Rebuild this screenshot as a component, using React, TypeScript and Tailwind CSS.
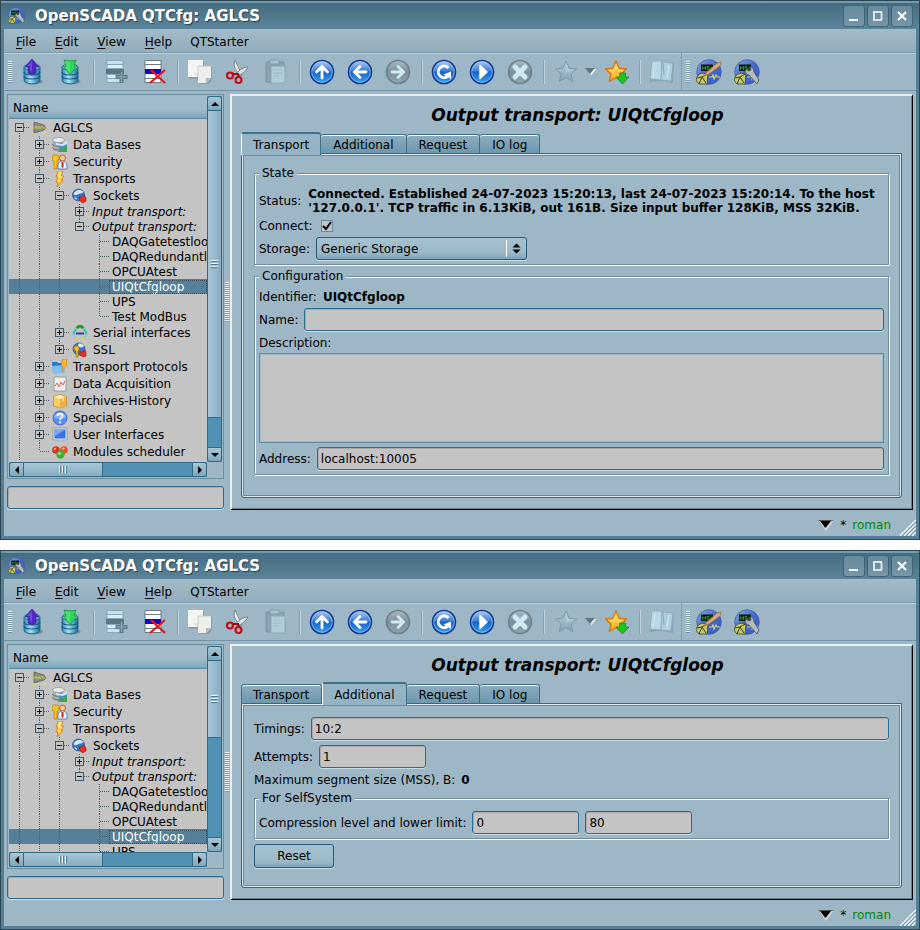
import { useId, useState } from 'react'
import type { ReactNode } from 'react'

type TreeNode = {
    label: string
    icon?: ReactNode
    italic?: boolean
    closed?: boolean
    children?: TreeNode[]
}

type TreeRow = {
    node: TreeNode
    guides: boolean[]
    last: boolean
    first: boolean
}

/* ---------- small 16px tree icons ---------- */

function Ico({ children }: { children: ReactNode }) {
    return (
        <svg width="16" height="16" viewBox="0 0 16 16" className="shrink-0" aria-hidden="true">
            {children}
        </svg>
    )
}

const StationIcon = (
    <Ico>
        <path d="M2 2l10 3 2 3-2 2-10 3z" fill="#8b8c82" stroke="#5e6058" strokeWidth="0.8" />
        <path d="M0 8h3l1-2 1 3 2-3 1 3 2-3 1 2h5" fill="none" stroke="#c9c94e" strokeWidth="0.9" />
        <path d="M0 14h4l1-1M9 13l2 1h4" fill="none" stroke="#e0e04a" strokeWidth="1" />
    </Ico>
)

const DatabaseIcon = (
    <Ico>
        <path d="M0.500 3.500v8c0 4 11 4 11 0v-8z" fill="#aab0b0" />
        <path d="M0.500 7c0 3 11 3 11 0M0.500 10.500c0 3 11 3 11 0" fill="none" stroke="#6d7373" strokeWidth="1" />
        <ellipse cx="6.500" cy="3" rx="6" ry="2.500" fill="#e6eaea" stroke="#8a9090" strokeWidth="0.7" />
        <path d="M7 6h8v9H7z" fill="#4c8fd0" />
        <path d="M6 15l3-4 2 1 4-4v7z" fill="#3aa64a" />
        <path d="M4 6l6 1 5-3v3l-4 2-7-1z" fill="#cfe8f7" />
    </Ico>
)

const SecurityIcon = (
    <Ico>
        <path d="M1 1h5l1 1v4L5 7v8H2V7L0 6V2z" fill="#f5c22b" stroke="#b5780a" strokeWidth="0.7" />
        <circle cx="10.500" cy="4" r="3" fill="#f3c79a" stroke="#b0562d" strokeWidth="0.9" />
        <path d="M6 15v-4c0-3 3-4 4.500-4S15 8 15 11v4z" fill="#eef4fc" stroke="#4a78c0" strokeWidth="0.9" />
        <path d="M9.500 8h2v5l-1 1-1-1z" fill="#d22" />
    </Ico>
)

const BoltIcon = (
    <Ico>
        <path d="M6 0h5L9 5h3L9 9h2l-6 7 1-5H4l2-5H4z" fill="#ffd94a" stroke="#e07a1a" strokeWidth="0.9" />
        <path d="M7 2h2L7 6h3" fill="none" stroke="#fff6c8" strokeWidth="0.8" />
    </Ico>
)

const SocketsIcon = (
    <Ico>
        <circle cx="6.500" cy="7" r="6" fill="#2f77cc" stroke="#1e4f96" strokeWidth="0.7" />
        <path d="M1.500 6c2-5 8-5 10-2-2 2-3 1-5 2S3 8 1.500 6zM2 10c2-1 3 0 3 2" fill="#dcecfa" />
        <path d="M7 9l2 0 3-2 2 3v3l-3 2-3-2z" fill="#e33122" stroke="#9a1710" strokeWidth="0.6" />
    </Ico>
)

const SerialIcon = (
    <Ico>
        <path d="M5 3.500c1-3 5-3 6 0" fill="none" stroke="#21a021" strokeWidth="3" />
        <path d="M4 4L2 7v2M12 4l2 3v2" fill="none" stroke="#2fc4c4" strokeWidth="2.4" />
        <path d="M1 9l2 3 3 3M15 9l-2 3-3 3" fill="none" stroke="#8dc9c0" strokeWidth="2.200" />
        <path d="M4 13l2 2M12 13l-2 2" fill="none" stroke="#e0dc3a" strokeWidth="1.800" />
        <path d="M4 8.500h8" stroke="#3a3ab0" strokeWidth="2" />
    </Ico>
)

const SslIcon = (
    <Ico>
        <circle cx="7" cy="7" r="6" fill="#2f77cc" stroke="#1e4f96" strokeWidth="0.7" />
        <path d="M6 2c3-1 5 0 6 2-2 2-4 2-6 0z" fill="#dcecfa" />
        <path d="M3 4h3l1 1v3l-1 1v6H4V9L2 8V5z" fill="#f5c22b" stroke="#9a6400" strokeWidth="0.7" />
        <path d="M8 10l2 0 3-2 1 3v3l-3 1-3-2z" fill="#e33122" stroke="#9a1710" strokeWidth="0.6" />
    </Ico>
)

const ProtocolIcon = (
    <Ico>
        <path d="M0 3h5l1 1h6v10H1z" fill="#2b77cf" />
        <path d="M0 7l12-1 1 8-12 1z" fill="#7fbdf5" />
        <path d="M11 0h4l-1 5h1l-5 8 1-6H9z" fill="#ffb928" stroke="#d9730f" strokeWidth="0.6" />
    </Ico>
)

const ChartIcon = (
    <Ico>
        <path d="M2 1h12v14H2z" fill="#f1efef" stroke="#8f9599" strokeWidth="0.9" />
        <path d="M3 10l2-3 2 4 2-5 2 3 2-4" fill="none" stroke="#d55a5a" strokeWidth="1" />
    </Ico>
)

const ArchiveIcon = (
    <Ico>
        <path d="M1.500 3.500L8 1.500l6.500 2v9.500L8 15l-6.500-2z" fill="#f7cf62" stroke="#c48f25" strokeWidth="0.8" />
        <path d="M2 4l6 2 6-2-6-2z" fill="#fdebae" />
        <path d="M8 6v9l6-2V4z" fill="#eab545" />
        <path d="M5 3l6 2v3" fill="none" stroke="#fff6d8" strokeWidth="1" />
    </Ico>
)

const QuestionIcon = (
    <Ico>
        <circle cx="8" cy="8" r="7" fill="#5a8ff0" stroke="#2d5cc8" strokeWidth="0.8" />
        <path d="M2 7c1-6 11-6 12 0-3 2-9 2-12 0z" fill="#9fc0fb" opacity="0.7" />
        <path d="M5.500 6c0-3 5-3 5 0 0 2-2.500 1.500-2.500 4" fill="none" stroke="#fff" strokeWidth="1.800" />
        <circle cx="8" cy="12.300" r="1.100" fill="#fff" />
    </Ico>
)

const MonitorIcon = (
    <Ico>
        <path d="M1 1h14v12H1z" fill="#dfe5ea" stroke="#8a959e" strokeWidth="0.8" />
        <path d="M2.500 2.500h11v9h-11z" fill="#3b74e0" />
        <path d="M2.500 2.500h11L3 9z" fill="#78a5f5" />
        <path d="M6 13h4l2 2H4z" fill="#b4bcc2" />
    </Ico>
)

const ModulesIcon = (
    <Ico>
        <circle cx="4" cy="6" r="3.800" fill="#d8331f" />
        <circle cx="12" cy="6" r="3.800" fill="#e8502c" />
        <circle cx="8.500" cy="10.500" r="4.200" fill="#3cb432" />
        <circle cx="3" cy="5" r="1.200" fill="#f79a8c" />
        <circle cx="7.500" cy="9.500" r="1.300" fill="#b0eda2" />
        <circle cx="11.500" cy="4.500" r="1" fill="#fde3a8" />
    </Ico>
)

const stationTree: TreeNode = {
    label: 'AGLCS',
    icon: StationIcon,
    children: [
        { label: 'Data Bases', icon: DatabaseIcon, closed: true },
        { label: 'Security', icon: SecurityIcon, closed: true },
        {
            label: 'Transports',
            icon: BoltIcon,
            children: [
                {
                    label: 'Sockets',
                    icon: SocketsIcon,
                    children: [
                        { label: 'Input transport:', italic: true, closed: true },
                        {
                            label: 'Output transport:',
                            italic: true,
                            children: [
                                { label: 'DAQGatetestloop' },
                                { label: 'DAQRedundantloop' },
                                { label: 'OPCUAtest' },
                                { label: 'UIQtCfgloop' },
                                { label: 'UPS' },
                                { label: 'Test ModBus' }
                            ]
                        }
                    ]
                },
                { label: 'Serial interfaces', icon: SerialIcon, closed: true },
                { label: 'SSL', icon: SslIcon, closed: true }
            ]
        },
        { label: 'Transport Protocols', icon: ProtocolIcon, closed: true },
        { label: 'Data Acquisition', icon: ChartIcon, closed: true },
        { label: 'Archives-History', icon: ArchiveIcon, closed: true },
        { label: 'Specials', icon: QuestionIcon, closed: true },
        { label: 'User Interfaces', icon: MonitorIcon, closed: true },
        { label: 'Modules scheduler', icon: ModulesIcon }
    ]
}

function flatten(node: TreeNode, guides: boolean[], last: boolean, first: boolean): TreeRow[] {
    const rows: TreeRow[] = [{ node, guides, last, first }]
    const kids = node.children ?? []
    kids.forEach((kid, i) => {
        rows.push(...flatten(kid, [...guides, !last], i === kids.length - 1, false))
    })
    return rows
}

const treeRows = flatten(stationTree, [], false, true)

function Guide({ height, on }: { height: number; on: boolean }) {
    return (
        <svg width="20" height={height} className="shrink-0" aria-hidden="true">
            {on && <path d={`M10.500 0v${height}`} stroke="#4d6169" strokeDasharray="1 1" />}
        </svg>
    )
}

function Branch({ row, height }: { row: TreeRow; height: number }) {
    const mid = Math.floor(height / 2)
    const { node, first, last } = row
    const expander = node.closed || node.children
    return (
        <svg width="20" height={height} className="shrink-0" aria-hidden="true" shapeRendering="crispEdges">
            <path d={`M10.500 ${first ? mid : 0}V${last ? mid : height}`} stroke="#4d6169" strokeDasharray="1 1" />
            <path d={`M11 ${mid + 0.5}H20`} stroke="#4d6169" strokeDasharray="1 1" />
            {expander && (
                <>
                    <rect x="6.500" y={mid - 3.5} width="8" height="8" fill="#c4c4c4" stroke="#3f5964" />
                    <path d={`M8 ${mid + 0.5}h5`} stroke="#000" />
                    {node.closed && <path d={`M10.500 ${mid - 2}v5`} stroke="#000" />}
                </>
            )}
        </svg>
    )
}

function Tree() {
    return (
        <ul>
            {treeRows.map((row) => {
                const { node } = row
                const height = node.icon ? 17 : 15
                const selected = node.label === 'UIQtCfgloop'
                return (
                    <li
                        key={node.label}
                        className={`flex items-center whitespace-nowrap ${node.icon ? 'h-[17px]' : 'h-[15px]'} ${selected ? 'bg-[#567f98] text-white' : ''}`}
                    >
                        {row.guides.map((on, i) => (
                            <Guide key={i} height={height} on={on} />
                        ))}
                        <Branch row={row} height={height} />
                        <span className={`flex items-center gap-[5px] pl-[3px] ${node.italic ? 'italic' : ''} ${selected ? 'grow outline-1 -outline-offset-1 outline-dotted outline-[#35505f]' : ''}`}>
                            {node.icon}
                            {node.label}
                        </span>
                    </li>
                )
            })}
        </ul>
    )
}

/* ---------- toolbar icons ---------- */

function BigIco({ children }: { children: ReactNode }) {
    return (
        <svg width="26" height="26" viewBox="0 0 26 26" aria-hidden="true">
            {children}
        </svg>
    )
}

function Gradients() {
    return (
        <svg width="0" height="0" className="absolute" aria-hidden="true">
            <defs>
                <linearGradient id="blue" x1="0" y1="0" x2="0" y2="1">
                    <stop offset="0" stopColor="#b4cdf0" />
                    <stop offset="0.45" stopColor="#3f7fd6" />
                    <stop offset="0.5" stopColor="#1763c8" />
                    <stop offset="1" stopColor="#35a5f2" />
                </linearGradient>
                <linearGradient id="grey" x1="0" y1="0" x2="0" y2="1">
                    <stop offset="0" stopColor="#a9bac3" />
                    <stop offset="0.5" stopColor="#7c909b" />
                    <stop offset="1" stopColor="#8fa5b0" />
                </linearGradient>
                <linearGradient id="cyl" x1="0" y1="0" x2="1" y2="0">
                    <stop offset="0" stopColor="#2b87b4" />
                    <stop offset="0.4" stopColor="#a5e2f7" />
                    <stop offset="1" stopColor="#1a6f9e" />
                </linearGradient>
                <linearGradient id="gold" x1="0" y1="0" x2="0" y2="1">
                    <stop offset="0" stopColor="#fff07a" />
                    <stop offset="1" stopColor="#fba61c" />
                </linearGradient>
                <linearGradient id="silver" x1="0" y1="0" x2="0" y2="1">
                    <stop offset="0" stopColor="#b7d0dc" />
                    <stop offset="1" stopColor="#86a2b1" />
                </linearGradient>
                <linearGradient id="ball" x1="0" y1="0" x2="1" y2="1">
                    <stop offset="0" stopColor="#8fa9e6" />
                    <stop offset="0.5" stopColor="#4468cc" />
                    <stop offset="1" stopColor="#3c5cc4" />
                </linearGradient>
            </defs>
        </svg>
    )
}

function Cylinder() {
    return (
        <>
            <ellipse cx="14.500" cy="22.500" rx="9" ry="3" fill="#4a5d68" opacity="0.5" />
            <path d="M5 8v13c0 5 16 5 16 0V8z" fill="url(#cyl)" stroke="#1b5c80" strokeWidth="0.8" />
            <path d="M5 13c0 4 16 4 16 0M5 17c0 4 16 4 16 0" fill="none" stroke="#175b80" strokeWidth="1.200" />
            <ellipse cx="13" cy="8" rx="8" ry="3" fill="#8fd6ef" stroke="#1b5c80" strokeWidth="0.8" />
        </>
    )
}

const LoadIcon = (
    <BigIco>
        <Cylinder />
        <path d="M13 0l7 8h-3v6c-2 2-6 2-8 0V8H6z" fill="#4f2bc4" stroke="#3c2096" strokeWidth="0.7" />
        <path d="M13 2v11l-2-1V7H8z" fill="#8a6be6" opacity="0.5" />
    </BigIco>
)

const SaveIcon = (
    <BigIco>
        <Cylinder />
        <path d="M7 1c4 1 8 1 12 0l-2 6h3l-7 9-7-9h3z" fill="#2fd45a" stroke="#189038" strokeWidth="0.7" />
        <path d="M8 2l5 1v11L8 8h2z" fill="#6fe888" opacity="0.5" />
    </BigIco>
)

const AddItemIcon = (
    <BigIco>
        <path d="M4 1.500h16v4H4zM4 19.500h16v4H4z" fill="#c5e2f0" stroke="#8ba7b5" />
        <path d="M4 5.500h16v4H4zM4 15.500h16v4H4z" fill="#d5eefa" stroke="#8ba7b5" />
        <path d="M3 10h18v5H3z" fill="#5b7683" />
        <path d="M18.500 12v12M12.500 18h12" stroke="#5c7785" strokeWidth="4" />
        <path d="M18.500 13v10M13.500 18h10" stroke="#86a2b0" strokeWidth="1.500" />
    </BigIco>
)

const DelItemIcon = (
    <BigIco>
        <path d="M4 1.500h16v22H4z" fill="#fff" stroke="#6d7a80" />
        <path d="M4 5.500h16M4 19.500h16" stroke="#6d7a80" />
        <path d="M4 10h16v5H4z" fill="#0909d6" />
        <path d="M10 11l14 13M24 11L9 24" stroke="#e51515" strokeWidth="2.200" fill="none" />
    </BigIco>
)

const CopyIcon = (
    <BigIco>
        <path d="M2 2h15v14l-3 4H2z" fill="#7f8f98" opacity="0.6" />
        <path d="M1 1h15v13l-4 4H1z" fill="#f4f4f2" />
        <path d="M12 8h13v13l-3 4H12z" fill="#7f8f98" opacity="0.6" />
        <path d="M11 7h13v12l-5 5h-8z" fill="#eeeeea" />
        <path d="M11 7h13M11 7v11" stroke="#b9bdbd" strokeWidth="0.7" />
        <path d="M24 19l-5 5v-5z" fill="#b4b9ba" />
        <path d="M11 18V14H7z" fill="#d5d8d8" />
    </BigIco>
)

const CutIcon = (
    <BigIco>
        <path d="M10 1c-2 5 0 9 4 14l3 2C15 11 12 6 10 1z" fill="#f0f2f2" stroke="#6d777b" strokeWidth="0.8" />
        <path d="M23 8c-4 0-8 2-12 7l2 2c3-2 8-4 10-9z" fill="#d9dedf" stroke="#6d777b" strokeWidth="0.8" />
        <circle cx="5" cy="16.500" r="3" fill="none" stroke="#c21018" strokeWidth="2.200" />
        <circle cx="13.500" cy="21" r="3" fill="none" stroke="#c21018" strokeWidth="2.200" />
        <path d="M7 15l6 0 1 3" fill="none" stroke="#a00c12" strokeWidth="2.200" />
    </BigIco>
)

const PasteIcon = (
    <BigIco>
        <path d="M3 3h18v20H3z" fill="#8aa4b1" stroke="#7891a0" strokeWidth="0.8" />
        <path d="M7 1h9v4H7z" fill="#a9c4d1" stroke="#7890a0" strokeWidth="0.7" />
        <path d="M8 7h14v17H8z" fill="#b0cdd9" stroke="#86a1b0" strokeWidth="0.8" />
        <path d="M10 11h9M10 14h9M10 17h6" stroke="#a0bcc9" />
    </BigIco>
)

function Round({ grey, children }: { grey?: boolean; children: ReactNode }) {
    return (
        <BigIco>
            <circle cx="13" cy="13" r="11.500" fill={grey ? 'url(#grey)' : 'url(#blue)'} stroke={grey ? '#6e828d' : '#10368f'} strokeWidth="1.600" />
            {!grey && <circle cx="13" cy="13" r="10.300" fill="none" stroke="#9cc8f5" strokeWidth="0.700" />}
            {children}
        </BigIco>
    )
}

const UpIcon = (
    <Round>
        <path d="M13 19V8.500M7.500 13L13 7.500l5.500 5.500" fill="none" stroke="#fff" strokeWidth="2.800" strokeLinecap="round" />
    </Round>
)
const BackIcon = (
    <Round>
        <path d="M19 13H8.500M13 7.500L7.500 13l5.500 5.500" fill="none" stroke="#fff" strokeWidth="2.800" strokeLinecap="round" />
    </Round>
)
const ForwardIcon = (
    <Round grey>
        <path d="M7 13h10.500M13 7.500l5.500 5.500-5.500 5.500" fill="none" stroke="#cfe9f5" strokeWidth="2.800" strokeLinecap="round" />
    </Round>
)
const RefreshIcon = (
    <Round>
        <path d="M17.500 9a5.800 5.800 0 1 0-1 8.500" fill="none" stroke="#fff" strokeWidth="2.800" />
        <path d="M12.500 15.500l7.500-3v7.500z" fill="#fff" />
    </Round>
)
const StartIcon = (
    <Round>
        <path d="M11 6.500l7 6.500-7 6.500z" fill="#fff" stroke="#fff" strokeWidth="1.500" strokeLinejoin="round" />
    </Round>
)
const StopIcon = (
    <Round grey>
        <path d="M8 8l10 10M18 8L8 18" stroke="#cfe9f5" strokeWidth="5" strokeLinecap="round" />
    </Round>
)

const starPath = 'M13 2l3.200 7.200 7.300.8-5.500 5 1.700 7.500L13 18.500 6.300 22.500 8 15 2.500 10l7.300-.8z'

const FavoriteIcon = (
    <BigIco>
        <path d={starPath} fill="url(#silver)" stroke="#7c98a8" strokeLinejoin="round" />
        <path d="M13 4l2.500 6 6 .8-8.500 3z" fill="#b7d0dc" opacity="0.6" />
    </BigIco>
)
const FavoriteAddIcon = (
    <BigIco>
        <path d={starPath} fill="url(#gold)" stroke="#d9740c" strokeWidth="1.400" strokeLinejoin="round" />
        <path d="M16.500 14h6v4H26l-6.500 7-6.500-7h3.500z" fill="#1fc51f" stroke="#0c8a0c" strokeWidth="0.7" />
    </BigIco>
)
const ManualIcon = (
    <BigIco>
        <path d="M3 4l10-1 12 1-1 20-12-2-12 1z" fill="#7e98a6" opacity="0.6" />
        <path d="M3 2h10l-1 19-11-1z" fill="#b9d8e6" stroke="#8aa5b3" strokeWidth="0.7" />
        <path d="M13 3l11 1-2 18-10-1z" fill="#b0cedc" stroke="#8aa5b3" strokeWidth="0.7" />
        <path d="M14 4l1 12" stroke="#8ba7b5" />
        <path d="M6 4L4 18M20 6l-2 13" stroke="#c9e3ee" strokeWidth="1.500" />
    </BigIco>
)

function ScadaBall({ children, size = 26 }: { children: ReactNode; size?: number }) {
    return (
        <svg width={size} height={size} viewBox="0 0 26 26" className="shrink-0" aria-hidden="true">
            <circle cx="13" cy="13" r="12.300" fill="url(#ball)" stroke="#3656a8" strokeWidth="0.7" />
            <path d="M5 5.500h12v6.500H5z" fill="#071607" />
            <path d="M6.500 11V7.500L8 9.500l1.500-2V11M13 7.500h-2v1.500h2V11h-2M15 7.500V11" fill="none" stroke="#2ca02c" strokeWidth="0.9" />
            <path d="M13 18h3l1-2 1 4 2-4 1 2h3" fill="none" stroke="#d2d268" strokeWidth="1.200" />
            <path d="M1 18c2-4 7-5 11-2-1 3 0 6-1 9H3c-3-3-3-5-2-7z" fill="#c4c86a" stroke="#3d411a" strokeWidth="0.8" />
            <path d="M1 19l5-1 5-3M6 18l-3 7M6 18l4 6" fill="none" stroke="#3d411a" strokeWidth="1" />
            {children}
        </svg>
    )
}

const PencilArt = (
    <path d="M10 14L21 4l4-1-1 4-11 8-5 2z" fill="#d9aa7c" stroke="#9a6a42" strokeWidth="0.8" />
)
const WrenchArt = (
    <path d="M12 10l3 2 2-1-1-3c3 0 4 2 4 5l5 8-2 4-8-9c-3 0-4-3-3-6z" fill="#b5bbc2" stroke="#4f575f" strokeWidth="0.9" />
)

function Tool({ name, children }: { name: string; children: ReactNode }) {
    return (
        <button type="button" aria-label={name} className="flex h-[34px] w-[38px] shrink-0 items-center justify-center">
            {children}
        </button>
    )
}

function Sep() {
    return (
        <span className="flex w-2 shrink-0 justify-center">
            <span className="h-6 w-px bg-[#86a3b3] shadow-[1px_0_#bdd3de]" />
        </span>
    )
}

function Grip() {
    return <span className="h-[22px] w-1 shrink-0 bg-[repeating-linear-gradient(#fff_0_1px,#6d8b9b_1px_2px)]" />
}

function Toolbar() {
    return (
        <div className="flex h-[38px] items-center overflow-hidden border-b border-[#7393a5] pl-1">
            <Grip />
            <div className="flex h-full items-center border-r border-[#7e9fb1] pl-px">
                <Tool name="Load">{LoadIcon}</Tool>
                <Tool name="Save">{SaveIcon}</Tool>
                <Sep />
                <Tool name="Add item">{AddItemIcon}</Tool>
                <Tool name="Delete item">{DelItemIcon}</Tool>
                <Sep />
                <Tool name="Copy">{CopyIcon}</Tool>
                <Tool name="Cut">{CutIcon}</Tool>
                <Tool name="Paste">{PasteIcon}</Tool>
                <Sep />
                <Tool name="Up">{UpIcon}</Tool>
                <Tool name="Previous">{BackIcon}</Tool>
                <Tool name="Next">{ForwardIcon}</Tool>
                <Sep />
                <Tool name="Refresh">{RefreshIcon}</Tool>
                <Tool name="Start">{StartIcon}</Tool>
                <Tool name="Stop">{StopIcon}</Tool>
                <Sep />
                <Tool name="Favorites">{FavoriteIcon}</Tool>
                <button type="button" aria-label="Favorites list" className="w-3 shrink-0">
                    <svg width="11" height="7" viewBox="0 0 11 7" aria-hidden="true">
                        <path d="M2 1h9L6.500 7z" fill="#fff" />
                        <path d="M0 0h10L5 6z" fill="#5f7883" />
                    </svg>
                </button>
                <Tool name="Add to favorites">{FavoriteAddIcon}</Tool>
                <Sep />
                <Tool name="Manual">{ManualIcon}</Tool>
            </div>
            <div className="flex items-center pl-1">
                <Grip />
                <Tool name="Vision">
                    <ScadaBall>{PencilArt}</ScadaBall>
                </Tool>
                <Tool name="Configurator">
                    <ScadaBall>{WrenchArt}</ScadaBall>
                </Tool>
            </div>
        </div>
    )
}

/* ---------- window frame ---------- */

function TitleButton({ name, children }: { name: string; children: ReactNode }) {
    return (
        <button
            type="button"
            aria-label={name}
            className="flex size-[22px] items-center justify-center rounded-[3px] border border-[#426477] bg-linear-to-b from-[#66899c] to-[#7796a8]"
        >
            <svg width="12" height="12" viewBox="0 0 12 12" fill="none" stroke="#fff" strokeWidth="2" aria-hidden="true">
                {children}
            </svg>
        </button>
    )
}

function TitleBar() {
    return (
        <div className="flex h-7 items-center gap-[10px] bg-linear-to-b from-[#456a7f] to-[#5b859b] pt-px pr-[6px] pl-[7px] shadow-[inset_0_2px_#6f9bb0]">
            <ScadaBall size={17}>{WrenchArt}</ScadaBall>
            <h1 className="grow text-[15px] font-bold text-white [text-shadow:1px_1px_1px_#24404f]">OpenSCADA QTCfg: AGLCS</h1>
            <div className="flex gap-[2px]">
                <TitleButton name="Minimize">
                    <path d="M1 10h9" />
                </TitleButton>
                <TitleButton name="Maximize">
                    <path d="M1 2h9M1 10h9M2 2v8M9.500 2v8" strokeWidth="1.500" />
                </TitleButton>
                <TitleButton name="Close">
                    <path d="M2 2l8 8M10 2l-8 8" />
                </TitleButton>
            </div>
        </div>
    )
}

function MenuBar() {
    const items = ['File', 'Edit', 'View', 'Help']
    return (
        <div className="flex h-6 items-center border-b border-[#7d9eb0] bg-linear-to-b from-[#a2bbc9] to-[#93adbc] pt-[2px] pl-[2px] shadow-[0_1px_#b9cfdb]">
            {items.map((item) => (
                <button key={item} type="button" className="pr-[9px] pl-[10px]">
                    <span className="underline underline-offset-2">{item[0]}</span>
                    {item.slice(1)}
                </button>
            ))}
            <button type="button" className="px-[9px]">QTStarter</button>
        </div>
    )
}

/* ---------- sidebar ---------- */

const scrollEdge = 'flex shrink-0 items-center justify-center border border-[#336883] bg-linear-to-b from-[#a9c6d6] to-[#7ea8be]'

function Arrow({ d }: { d: string }) {
    return (
        <svg width="8" height="8" viewBox="0 0 8 8" className="shrink-0" aria-hidden="true">
            <path d={d} fill="#000" />
        </svg>
    )
}

const fieldLook = 'h-[23px] min-w-0 rounded-[3px] border border-[#2f6b8c] bg-[#c4c4c4] px-[3px] shadow-[0_1px_#c9dce6,inset_1px_1px_#a9a9a9] outline-none'

function Sidebar({ treeHeight, thumbHeight }: { treeHeight: string; thumbHeight: string }) {
    return (
        <aside className="flex w-[217px] shrink-0 flex-col gap-[7px] pb-px">
            <div className="flex border border-[#6b8fa3] p-px">
                <div className="min-w-0 flex-1">
                    <div className="flex h-[23px] items-center border-b border-[#5d8ba3] bg-linear-to-b from-[#a2bccb] from-60% to-[#78a5bd] pt-[2px] pl-1">Name</div>
                    <div className={`overflow-hidden bg-[#c4c4c4] ${treeHeight}`}>
                        <Tree />
                    </div>
                    <div className="flex h-[15px] bg-[#5091b4]">
                        <button type="button" aria-label="Scroll left" className={`w-[15px] rounded-l-[3px] ${scrollEdge}`}>
                            <Arrow d="M6 0v8L2 4z" />
                        </button>
                        <div className="flex w-[79px] items-center justify-center gap-px border-y border-r border-[#336883] bg-linear-to-b from-[#a9c6d6] to-[#86adc2]">
                            <span className="h-[7px] w-[9px] bg-[repeating-linear-gradient(90deg,#fff_0_1px,#4a7f9b_1px_2px,#93b5c6_2px_3px)]" />
                        </div>
                        <div className="grow border-y border-[#336883]" />
                        <button type="button" aria-label="Scroll right" className={`w-[15px] rounded-r-[3px] ${scrollEdge}`}>
                            <Arrow d="M2 0v8l4-4z" />
                        </button>
                    </div>
                </div>
                <div className="mb-[15px] flex w-[15px] flex-col bg-[#5091b4]">
                    <button type="button" aria-label="Scroll up" className={`h-[15px] rounded-t-[3px] ${scrollEdge}`}>
                        <Arrow d="M0 6h8L4 2z" />
                    </button>
                    <div className={`flex items-center justify-center border-x border-b border-[#336883] bg-linear-to-r from-[#a9c6d6] to-[#86adc2] ${thumbHeight}`}>
                        <span className="h-[9px] w-[7px] bg-[repeating-linear-gradient(#fff_0_1px,#4a7f9b_1px_2px,#93b5c6_2px_3px)]" />
                    </div>
                    <div className="grow border-x border-[#336883]" />
                    <button type="button" aria-label="Scroll down" className={`h-[15px] rounded-b-[3px] ${scrollEdge}`}>
                        <Arrow d="M0 2h8L4 6z" />
                    </button>
                </div>
            </div>
            <input type="text" aria-label="Search" className={fieldLook} />
        </aside>
    )
}

/* ---------- form parts ---------- */

function TextField({ label, value = '', width = 'grow' }: { label: string; value?: string; width?: string }) {
    const id = useId()
    return (
        <div className="flex items-center gap-[6px]">
            <label htmlFor={id} className="shrink-0">{label}</label>
            <input id={id} type="text" defaultValue={value} className={`${fieldLook} ${width}`} />
        </div>
    )
}

function Group({ title, className, children }: { title: string; className: string; children: ReactNode }) {
    return (
        <fieldset className={`min-w-0 border border-[#728c9a] px-1 pb-1 shadow-[inset_1px_1px_#fff,1px_1px_#fff] ${className}`}>
            <legend className="bg-[#9db7c6] px-[3px]">{title}</legend>
            <div className="flex flex-col gap-1">{children}</div>
        </fieldset>
    )
}

function TransportPane() {
    const id = useId()
    return (
        <div className="flex flex-col gap-1">
            <Group title="State" className="pt-[7px]">
                <div className="flex items-center gap-[7px]">
                    <span>Status:</span>
                    <strong>
                        Connected. Established 24-07-2023 15:20:13, last 24-07-2023 15:20:14. To the host '127.0.0.1'. TCP traffic in 6.13KiB, out 161B. Size input buffer 128KiB, MSS 32KiB.
                    </strong>
                </div>
                <div className="flex h-[14px] items-center gap-2">
                    <label htmlFor={`${id}-con`}>Connect:</label>
                    <span className="relative flex">
                        <input
                            id={`${id}-con`}
                            type="checkbox"
                            defaultChecked
                            className="peer size-3 appearance-none border border-[#5f8aa0] bg-[#c4c4c4]"
                        />
                        <svg width="12" height="12" viewBox="0 0 12 12" className="pointer-events-none absolute inset-0 hidden peer-checked:block" aria-hidden="true">
                            <path d="M2 6l3 3 5-7" fill="none" stroke="#000" strokeWidth="2" />
                        </svg>
                    </span>
                </div>
                <div className="flex items-center gap-[6px]">
                    <label htmlFor={`${id}-stor`}>Storage:</label>
                    <span className="relative">
                        <select
                            id={`${id}-stor`}
                            className="block h-[23px] w-[211px] appearance-none rounded-[3px] border border-[#265c7a] bg-linear-to-b from-[#a6c2d1] via-[#9bb8c7] via-70% to-[#7aa6be] px-1 shadow-[0_1px_#c9dce6]"
                        >
                            <option>Generic Storage</option>
                        </select>
                        <span className="pointer-events-none absolute inset-y-[3px] right-[6px] flex items-center gap-[5px]">
                            <span className="h-full w-px bg-white" />
                            <svg width="9" height="11" viewBox="0 0 9 11" aria-hidden="true">
                                <path d="M0.500 4.500h8l-4-4zM0.500 6.500h8l-4 4z" fill="#000" />
                            </svg>
                        </span>
                    </span>
                </div>
            </Group>
            <Group title="Configuration" className="pt-[6px]">
                <div className="flex h-[15px] items-center gap-[6px]">
                    <span>Identifier:</span>
                    <strong>UIQtCfgloop</strong>
                </div>
                <TextField label="Name:" />
                <label htmlFor={`${id}-descr`} className="h-[14px] leading-4">Description:</label>
                <textarea
                    id={`${id}-descr`}
                    className="block h-[90px] resize-none border border-[#5f8aa0] bg-[#c4c4c4] shadow-[inset_0_0_0_1px_#9dbccb] outline-none"
                />
                <TextField label="Address:" value="localhost:10005" />
            </Group>
        </div>
    )
}

function AdditionalPane() {
    return (
        <div className="flex flex-col gap-[5px] pt-px">
            <TextField label="Timings:" value="10:2" />
            <TextField label="Attempts:" value="1" width="w-[107px]" />
            <div className="flex h-[13px] gap-[6px]">
                <span>Maximum segment size (MSS), B:</span>
                <strong>0</strong>
            </div>
            <Group title="For SelfSystem" className="pt-[6px]">
                <div className="flex gap-[6px]">
                    <TextField label="Compression level and lower limit:" value="0" width="w-[107px]" />
                    <input type="text" aria-label="Lower limit" defaultValue="80" className={`${fieldLook} w-[107px]`} />
                </div>
            </Group>
            <button
                type="button"
                className="h-6 w-20 rounded-[3px] border border-[#265c7a] bg-linear-to-b from-[#a6c2d1] via-[#9bb8c7] via-75% to-[#7aa6be] shadow-[0_1px_#c9dce6]"
            >
                Reset
            </button>
        </div>
    )
}

const tabNames = ['Transport', 'Additional', 'Request', 'IO log']

function Tabs({ initial }: { initial: string }) {
    const [tab, setTab] = useState(initial)
    return (
        <div className="flex grow flex-col">
            <div role="tablist" className="flex h-[21px] items-end">
                {tabNames.map((name) => (
                    <button
                        key={name}
                        type="button"
                        role="tab"
                        aria-selected={tab === name}
                        onClick={() => setTab(name)}
                        className={
                            tab === name
                                ? 'relative z-10 -mb-[2px] h-[23px] rounded-t-[3px] border-x border-t-2 border-t-[#426f89] border-r-[#426f89] border-l-white bg-linear-to-b from-[#96b4c5] to-[#93b3c5] px-[11px]'
                                : 'h-[19px] rounded-t-[3px] border-t border-r border-[#3c6b84] bg-linear-to-b from-[#8eacbd] to-[#6c98af] px-3 pt-px shadow-[inset_0_1px_#fff] first:border-l first:pl-[11px]'
                        }
                    >
                        {name}
                    </button>
                ))}
            </div>
            <div role="tabpanel" className="grow rounded-b-[3px] border border-[#33698a] p-3 pb-[19px] shadow-[inset_0_0_0_1px_#d9e6ec,inset_0_0_0_2px_#5f8fa8]">
                {tab === 'Transport' && <TransportPane />}
                {tab === 'Additional' && <AdditionalPane />}
            </div>
        </div>
    )
}

function StatusBar() {
    return (
        <footer className="flex h-[26px] items-center justify-end gap-[6px] pt-1">
            <button type="button" aria-label="Station state">
                <svg width="16" height="11" viewBox="0 0 16 11" aria-hidden="true">
                    <path d="M0 0h16L8 11z" fill="#d5d5d5" />
                    <path d="M0 0h16l-2 1H1l6 8z" fill="#555" />
                    <path d="M2 1h11L7.500 8z" fill="#000" />
                </svg>
            </button>
            <span>*</span>
            <span className="text-[#008a00]">roman</span>
            <svg width="19" height="17" viewBox="0 0 19 17" className="self-end" aria-hidden="true">
                <path d="M3 17L19 1M7 17L19 5M11 17l8-8M15 17l4-4" stroke="#fff" strokeWidth="1.200" />
                <path d="M5 17L19 3M9 17L19 7M13 17l6-6M17 17l2-2" stroke="#6f8f9f" strokeWidth="1" />
            </svg>
        </footer>
    )
}

function CfgWindow({ tab, treeHeight, thumbHeight }: { tab: string; treeHeight: string; thumbHeight: string }) {
    return (
        <section className="border border-[#2c4653] bg-[#557f96]">
            <TitleBar />
            <div className="mx-[3px] mb-[3px] bg-[#9db7c6]">
                <MenuBar />
                <Toolbar />
                <div className="flex px-[3px] pt-[3px]">
                    <Sidebar treeHeight={treeHeight} thumbHeight={thumbHeight} />
                    <div className="flex w-[6px] shrink-0 items-center justify-center">
                        <span className="h-10 w-1 bg-[repeating-linear-gradient(#fff_0_1px,#7897a7_1px_2px)]" />
                    </div>
                    <main className="flex min-w-0 grow flex-col border-t-2 border-r border-b border-l-2 border-t-[#e8f0f4] border-r-black border-b-black border-l-[#e8f0f4] pt-[9px] pr-[10px] pb-[11px] pl-[9px] shadow-[inset_-1px_-1px_#6b7f89]">
                        <h2 className="mb-[7px] pl-3 text-center text-[17px] leading-5 font-bold italic">Output transport: UIQtCfgloop</h2>
                        <Tabs initial={tab} />
                    </main>
                </div>
                <StatusBar />
            </div>
        </section>
    )
}

export default function App() {
    return (
        <div className="flex flex-col gap-[10px] bg-white font-['DejaVu_Sans',sans-serif] text-[12px] leading-[14px] text-black">
            <Gradients />
            <CfgWindow tab="Transport" treeHeight="h-[343px]" thumbHeight="h-[307px]" />
            <CfgWindow tab="Additional" treeHeight="h-[183px]" thumbHeight="h-[77px]" />
        </div>
    )
}
